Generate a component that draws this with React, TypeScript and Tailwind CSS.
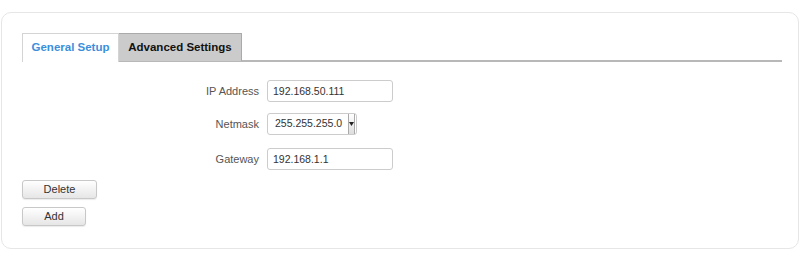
const App = () => {
  const label = 'w-[245px] pr-[8px] text-right text-[11px] text-[#555]';
  const input =
    'h-[22px] w-[126px] rounded-[3px] border border-[#ccc] bg-white px-[5px] text-[10.5px] text-[#333] outline-none';
  const btn =
    'h-[19px] rounded-[3px] border border-[#c8c8c8] bg-gradient-to-b from-white to-[#e6e6e6] text-[11px] text-[#333] shadow-[0_1px_1px_rgba(0,0,0,0.08)]';

  return (
    <div className="h-[261px] w-[800px] bg-white pt-[12px] pl-[1px] font-['Liberation_Sans',Arial,sans-serif]">
      <div className="h-[237px] w-[798px] rounded-[10px] border border-[#e6e6e6] bg-white px-[20px] pt-[20px]">
        {/* tabs */}
        <div className="flex h-[29px] w-[760px] border-b-2 border-[#b8b8b8]">
          <div className="flex h-[29px] w-[97px] items-center justify-center border border-b-0 border-[#d4d4d4] bg-white text-[11.5px] font-bold text-[#3b8fdb]">
            General Setup
          </div>
          <div className="flex h-[28px] w-[123px] items-center justify-center border border-b-0 border-l-0 border-[#aaa] bg-[#cbcbcb] text-[11.5px] font-bold text-[#111]">
            Advanced Settings
          </div>
        </div>

        {/* form */}
        <div className="mt-[18px] flex flex-col">
          <div className="flex items-center">
            <span className={label}>IP Address</span>
            <input className={input} defaultValue="192.168.50.111" />
          </div>
          <div className="mt-[11px] flex items-center">
            <span className={label}>Netmask</span>
            <div className="flex h-[22px] w-[90px] items-center rounded-[3px] border border-[#ccc] bg-white">
              <span className="flex-1 pl-[7px] text-[10.5px] text-[#333]">255.255.255.0</span>
              <div className="mr-[1px] flex h-[20px] w-[7px] items-center justify-center border-x border-[#aaa] bg-gradient-to-b from-white to-[#ddd]">
                <svg width="5" height="4" viewBox="0 0 5 4">
                  <path d="M0 0 H5 L2.5 4 Z" fill="#222" />
                </svg>
              </div>
            </div>
          </div>
          <div className="mt-[13px] flex items-center">
            <span className={label}>Gateway</span>
            <input className={input} defaultValue="192.168.1.1" />
          </div>
        </div>

        {/* actions */}
        <div className="mt-[10px] flex flex-col items-start gap-[8px]">
          <button className={`${btn} w-[75px]`}>Delete</button>
          <button className={`${btn} w-[64px]`}>Add</button>
        </div>
      </div>
    </div>
  );
};

export default App;
